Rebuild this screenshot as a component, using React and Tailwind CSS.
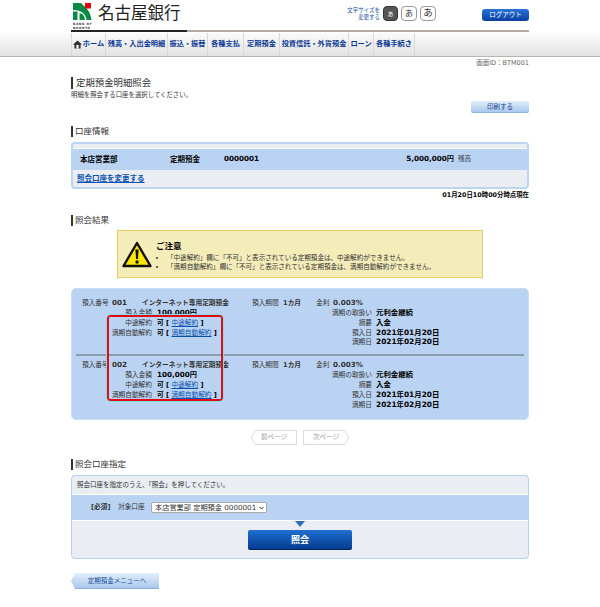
import React from 'react';

const font = { fontFamily: '"DejaVu Sans", "Noto Sans CJK JP", sans-serif' };

const navItems = [
    { label: 'ホーム', width: 'w-[34px]', home: true },
    { label: '残高・入出金明細', width: 'w-[62px]' },
    { label: '振込・振替', width: 'w-[40px]' },
    { label: '各種支払', width: 'w-[36px]' },
    { label: '定期預金', width: 'w-[36px]' },
    { label: '投資信託・外貨預金', width: 'w-[69px]' },
    { label: 'ローン', width: 'w-[25px]' },
    { label: '各種手続き', width: 'w-[42px]' },
];

const Logo = () => (
    <div className="w-[19px] shrink-0">
        <svg width="19" height="18" viewBox="0 0 19 18" className="block">
            <path d="M0 0H8C10 3 17 5 18.5 17H13.5C13 11.5 9 7 0 7Z" fill="#0a8a46" />
            <rect x="0" y="8.5" width="4.5" height="8.5" fill="#0a8a46" />
            <path d="M6.5 10.5H8.5C10.5 11.5 11.5 13.5 12 17H6.5Z" fill="#0a8a46" />
            <rect x="12" y="0" width="6" height="5.5" fill="#e60012" />
        </svg>
        <div className="mt-[1px] text-[3px] leading-[4px] font-bold tracking-[0.6px] whitespace-nowrap text-[#333333]">BANK OF<br />NAGOYA</div>
    </div>
);

const Heading = ({ children, className = '' }) => (
    <div className={`flex items-center ${className}`}>
        <span className="w-[2px] h-[11px] bg-[#333333]" />
        <span className="ml-[2px] text-[8.5px] leading-[11px] text-[#333333]">{children}</span>
    </div>
);

const Warning = () => (
    <svg width="30" height="27" viewBox="0 0 30 27" className="shrink-0">
        <path d="M15 2 L28.5 25 H1.5 Z" fill="#ffe600" stroke="#111" strokeWidth="2.4" strokeLinejoin="round" />
        <path d="M13.4 8.5h3.2l-.7 9.5h-1.8z" fill="#111" />
        <circle cx="15" cy="21" r="1.7" fill="#111" />
    </svg>
);

const PageButton = ({ children, dir }) => (
    <div className="relative w-[46px] h-[15px] leading-[15px] text-center">
        <svg width="46" height="15" viewBox="0 0 46 15" className="absolute inset-0">
            <path
                d={dir === 'left' ? 'M4 .5H45.5V14.5H4L.5 7.5Z' : 'M.5 .5H42L45.5 7.5L42 14.5H.5Z'}
                fill="#fff"
                stroke="#dcdcdc"
            />
        </svg>
        <span className="relative">{children}</span>
    </div>
);

const DepositLine = ({ left, leftValue, right, rightValue }) => (
    <div className="grid grid-cols-[80px_148px_72px_1fr] h-[9.8px] leading-[10px] items-center">
        <span className="text-right text-[#333333]">{left}</span>
        <span className="pl-[5px] font-bold text-black">{leftValue}</span>
        <span className="text-right text-[#333333]">{right}</span>
        <span className="pl-[4px] font-bold text-black text-[7.4px]">{rightValue}</span>
    </div>
);

const Deposit = ({ no }) => (
    <div className="text-[6.7px]">
        <div className="flex h-[10px] leading-[10px] items-center">
            <span className="ml-[10px] w-[30px] text-[#333333]">預入番号</span>
            <span className="w-[30px] font-bold text-[7.2px]">{no}</span>
            <span className="w-[110px] font-bold">インターネット専用定期預金</span>
            <span className="w-[31px] text-[#333333]">預入期間</span>
            <span className="w-[33px] font-bold">1カ月</span>
            <span className="w-[17px] text-[#333333]">金利</span>
            <span className="font-bold text-[7.2px]">0.003%</span>
        </div>
        <DepositLine left="預入金額" leftValue={<span className="text-[7.2px]">100,000円</span>} right="満期の取扱い" rightValue="元利金継続" />
        <DepositLine left="中途解約" leftValue={<span>可 [ <a className="font-normal text-[#0b52b0] underline">中途解約</a> ]</span>} right="摘要" rightValue="入金" />
        <DepositLine left="満期自動解約" leftValue={<span>可 [ <a className="font-normal text-[#0b52b0] underline">満期自動解約</a> ]</span>} right="預入日" rightValue="2021年01月20日" />
        <DepositLine left="" leftValue="" right="満期日" rightValue="2021年02月20日" />
    </div>
);

const App = () => {
    return (
        <div className="w-[600px] h-[607px] bg-white overflow-hidden text-[#333333]" style={font}>
            {/* header */}
            <div className="w-[458px] ml-[71px] h-[33px] flex flex-col">
                <div className="flex h-[30px] items-start">
                    <div className="ml-[2px] mt-[3px]"><Logo /></div>
                    <span className="ml-[6px] mt-[2px] text-[16.5px] leading-[24px] text-[#222222] whitespace-nowrap">名古屋銀行</span>
                    <div className="ml-auto mt-[6px] flex items-center">
                        <div className="text-[5.5px] leading-[6.5px] text-right text-[#1c4fa0] whitespace-nowrap">文字サイズを<br />変更する</div>
                        <div className="ml-[3px] w-[15px] h-[15px] rounded-[4px] bg-[#555555] border border-[#333333] text-white text-[6px] flex items-center justify-center">あ</div>
                        <div className="ml-[3px] w-[16px] h-[15px] rounded-[4px] bg-white border border-[#999999] text-[8px] flex items-center justify-center">あ</div>
                        <div className="ml-[3px] w-[16px] h-[15px] rounded-[4px] bg-white border border-[#999999] text-[9.5px] flex items-center justify-center">あ</div>
                    </div>
                    <div className="ml-[46px] mt-[9px] w-[47px] h-[12px] shrink-0 rounded-[3px] bg-gradient-to-b from-[#2a73d6] to-[#0b3fa0] text-white text-[6.5px] leading-[12px] text-center">ログアウト</div>
                </div>
                <div className="flex h-[2px]">
                    <div className="w-[116px] bg-[#222222]" />
                    <div className="flex-1 bg-[#b5aaa3]" />
                </div>
            </div>

            {/* nav */}
            <div className="h-[24px] bg-gradient-to-b from-[#fbfbfb] to-[#e2e2e2] border-b border-[#b5b5b5] pl-[71px] flex">
                {navItems.map(item => (
                    <div key={item.label} className={`${item.width} shrink-0 border-l border-[#d8d8d8] last:border-r flex items-center justify-center text-[7.2px] font-bold text-[#0b3a94] whitespace-nowrap`}>
                        {item.home && (
                            <svg width="9" height="9" viewBox="0 0 9 9" className="mr-[1px]">
                                <path d="M4.5 .5 9 4.5H7.6v4H1.4v-4H0z" fill="#333" />
                                <rect x="3.4" y="5" width="2.2" height="3.5" fill="#fff" />
                            </svg>
                        )}
                        {item.label}
                    </div>
                ))}
            </div>

            <div className="w-[458px] ml-[71px]">
                <div className="h-[13px] text-right text-[6.5px] leading-[13px] text-[#666666]">画面ID：BTM001</div>

                {/* title */}
                <div className="flex items-center mt-[7px]">
                    <span className="w-[2px] h-[12px] bg-[#333333]" />
                    <span className="ml-[3px] text-[9.4px] leading-[12px] text-[#333333]">定期預金明細照会</span>
                </div>
                <div className="mt-[2px] text-[6.4px] leading-[9px]">明細を照会する口座を選択してください。</div>
                <div className="mt-[1px] flex justify-end">
                    <div className="w-[58px] h-[12px] rounded-[2px] bg-gradient-to-b from-[#e3eefb] to-[#a9c8ec] border-b border-[#8fb0da] text-[6.5px] leading-[12px] text-center text-[#123f90]">印刷する</div>
                </div>

                {/* account */}
                <Heading className="mt-[13px]">口座情報</Heading>
                <div className="mt-[5px] h-[47px] border-2 border-[#bcd5f4] rounded-[4px] bg-[#eaedf2] overflow-hidden">
                    <div className="h-[4px]" />
                    <div className="h-[22px] bg-[#bad3f3] border-t border-[#ffffff] flex items-center font-bold text-[7.5px] text-black">
                        <span className="ml-[7px] w-[90px]">本店営業部</span>
                        <span className="w-[54px]">定期預金</span>
                        <span className="w-[180px] text-[7.2px]">0000001</span>
                        <span className="w-[50px] text-right text-[7.2px] whitespace-nowrap">5,000,000円</span>
                        <span className="ml-[4px] font-normal text-[#333333] text-[6.5px]">残高</span>
                    </div>
                    <div className="pl-[4px] text-[7.5px] leading-[18px] font-bold text-[#0b52b0] underline">照会口座を変更する</div>
                </div>
                <div className="mt-[2px] text-right text-[6.4px] leading-[9px] font-bold text-black">01月20日10時00分時点現在</div>

                {/* result */}
                <Heading className="mt-[15px]">照会結果</Heading>
                <div className="mt-[4px] ml-[46px] w-[366px] h-[48px] bg-[#f5edb9] border border-[#e3cf63] flex">
                    <div className="ml-[4px] mt-[10px]"><Warning /></div>
                    <div className="ml-[4px] mt-[10px]">
                        <div className="text-[8.5px] leading-[10px] font-bold text-black">ご注意</div>
                        <ul className="mt-[3px] text-[6.55px] leading-[9px] list-disc pl-[11px]">
                            <li>「中途解約」欄に「不可」と表示されている定期預金は、中途解約ができません。</li>
                            <li>「満期自動解約」欄に「不可」と表示されている定期預金は、満期自動解約ができません。</li>
                        </ul>
                    </div>
                </div>

                <div className="relative mt-[10px] h-[132px] rounded-[5px] bg-[#bad3f3] border border-[#c9dcf6] pt-[9px]">
                    <Deposit no="001" />
                    <div className="mt-[7px] mb-[4px] ml-[4px] mr-[4px] h-[2px] bg-[#8d9db0]" />
                    <Deposit no="002" />
                    <div className="absolute left-[35px] top-[26px] w-[116px] h-[86px] border-2 border-[#e60a14] rounded-[3px] outline outline-1 outline-[#7fe0e8]" />
                </div>

                {/* paging */}
                <div className="mt-[10px] flex justify-center gap-[6px] text-[6.6px] text-[#999999]">
                    <PageButton dir="left">前ページ</PageButton>
                    <PageButton dir="right">次ページ</PageButton>
                </div>

                {/* specify */}
                <Heading className="mt-[14px]">照会口座指定</Heading>
                <div className="mt-[5px] h-[84px] border border-[#b5d0f0] rounded-[4px] bg-[#eaedf2] overflow-hidden">
                    <div className="h-[18px] pl-[5px] text-[6.5px] leading-[18px]">照会口座を指定のうえ、「照会」を押してください。</div>
                    <div className="h-[27px] bg-[#bad3f3] border-y border-white flex items-center text-[6.7px]">
                        <span className="ml-[19px] font-bold w-[27px]">[必須]</span>
                        <span className="w-[33px] text-[#333333]">対象口座</span>
                        <div className="relative w-[116px] h-[11px]">
                            <select defaultValue="a" className="appearance-none block w-full h-full bg-white border border-[#aaaaaa] rounded-[2px] text-[7.2px] leading-[9px] text-[#333333] pl-[3px] pr-0">
                                <option value="a">本店営業部 定期預金 0000001</option>
                            </select>
                            <svg width="5" height="4" viewBox="0 0 5 4" className="absolute right-[3px] top-[4px]">
                                <path d="M.5 .8 2.5 3 4.5 .8" fill="none" stroke="#333" strokeWidth="1" />
                            </svg>
                        </div>
                    </div>
                    <div className="relative flex justify-center pt-[9px]">
                        <div className="absolute top-0 left-[223px] w-0 h-0 border-l-[5px] border-r-[5px] border-t-[6px] border-l-transparent border-r-transparent border-t-[#2f6fb5]" />
                        <div className="w-[104px] h-[20px] rounded-[2px] bg-gradient-to-b from-[#1f6fd0] to-[#063c92] border-b border-[#04265c] text-white text-[9px] font-bold leading-[20px] text-center">照会</div>
                    </div>
                </div>

                <div className="mt-[14px] w-[88px] h-[16px] pl-[4px] bg-gradient-to-b from-[#e3eefb] to-[#a9c8ec] border-b border-[#8fb0da] text-[6.5px] leading-[16px] text-center text-[#1c4f9a]" style={{ clipPath: 'polygon(4px 0, 100% 0, 100% 100%, 4px 100%, 0 50%)' }}>定期預金メニューへ</div>
            </div>
        </div>
    );
};

export default App;
